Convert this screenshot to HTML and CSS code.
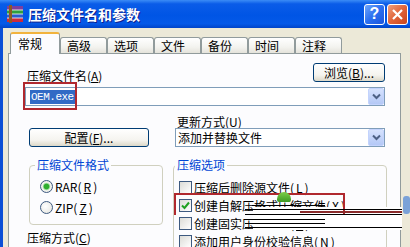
FILE: index.html
```html
<!DOCTYPE html>
<html lang="zh-CN">
<head>
  <meta charset="UTF-8">
  <title>压缩文件名和参数</title>
  <link rel="stylesheet" href="styles.css">
</head>
<body>
  <div class="window">
    <div class="titlebar">
      <svg class="app-icon" viewBox="0 0 19 18">
        <rect x="2" y="1" width="16" height="4" fill="#7b3f9e"/>
        <rect x="2" y="5" width="16" height="4" fill="#2f9f3f"/>
        <rect x="2" y="9" width="16" height="4" fill="#2c5ccc"/>
        <rect x="2" y="13" width="16" height="4" fill="#cc2a3c"/>
        <path d="M2 5h16M2 9h16M2 13h16" stroke="#fff" stroke-width="0.8"/>
        <rect x="4" y="0" width="3" height="18" fill="#8c5a24"/>
      </svg>
      <span class="title">压缩文件名和参数</span>
      <span class="tb-btn help">?</span>
      <span class="tb-btn close">
        <svg width="13" height="13" viewBox="0 0 13 13"><path d="M2 2L11 11M11 2L2 11" stroke="#fff" stroke-width="2.2"/></svg>
      </span>
    </div>

    <div class="client">
      <div class="tabs">
        <div class="tab active">常规</div>
        <div class="tab">高级</div>
        <div class="tab">选项</div>
        <div class="tab">文件</div>
        <div class="tab">备份</div>
        <div class="tab">时间</div>
        <div class="tab">注释</div>
      </div>

      <div class="panel">
        <div class="name-row">
          <span class="label">压缩文件名(<u>A</u>)</span>
          <button class="btn browse">浏览(<u>B</u>)...</button>
        </div>
        <div class="combo name-combo">
          <span class="sel">OEM.exe</span>
          <span class="drop"><svg width="9" height="7" viewBox="0 0 9 7"><path d="M1 1.5L4.5 5L8 1.5" fill="none" stroke="#4d6185" stroke-width="2"/></svg></span>
        </div>

        <div class="settings">
          <div class="col">
            <button class="btn config">配置(<u>F</u>)...</button>
            <fieldset class="group format">
              <legend>压缩文件格式</legend>
              <div class="opt radio-row"><span class="radio on"></span>RAR(<u>R</u>)</div>
              <div class="opt radio-row"><span class="radio"></span>ZIP(<u>Z</u>)</div>
            </fieldset>
            <div class="label method">压缩方式(<u>C</u>)</div>
          </div>
          <div class="col">
            <div class="label">更新方式(<u>U</u>)</div>
            <div class="combo">
              <span class="combo-text">添加并替换文件</span>
              <span class="drop"><svg width="9" height="7" viewBox="0 0 9 7"><path d="M1 1.5L4.5 5L8 1.5" fill="none" stroke="#4d6185" stroke-width="2"/></svg></span>
            </div>
            <fieldset class="group options">
              <legend>压缩选项</legend>
              <div class="opt check-row"><span class="check"></span>压缩后删除源文件(<u>L</u>)</div>
              <div class="opt check-row"><span class="check"><svg width="11" height="11" viewBox="0 0 11 11"><path d="M2 5.5L4.5 8L9 2.5" fill="none" stroke="#21a121" stroke-width="2"/></svg></span>创建自解压格式压缩文件(<u>X</u>)</div>
              <div class="opt check-row"><span class="check"></span>创建固实压缩文件(<u>S</u>)</div>
              <div class="opt check-row"><span class="check"></span>添加用户身份校验信息(<u>N</u>)</div>
            </fieldset>
          </div>
        </div>
      </div>
    </div>

    <!-- red marks and scribbles drawn over the screenshot -->
    <div class="mark mark-name"></div>
    <div class="wipe"></div>
    <div class="mark mark-sfx"></div>
    <div class="blob"></div>
    <div class="ink" style="left:252px; top:205px; width:73px;"></div>
    <div class="ink" style="left:245px; top:209px; width:157px;"></div>
    <div class="ink red" style="left:300px; top:211px; width:102px;"></div>
    <div class="ink" style="left:245px; top:214px; width:157px;"></div>
    <div class="ink" style="left:252px; top:219px; width:73px;"></div>
    <div class="ink" style="left:245px; top:223px; width:80px;"></div>
    <div class="ink" style="left:245px; top:227px; width:157px;"></div>
    <div class="side-blue"></div>
  </div>
</body>
</html>
```

FILE: styles.css
```css
* {
  box-sizing: border-box;
}
body {
  margin: 0;
  background: #ece9d8;
  font-family: "Noto Sans CJK SC", "Liberation Sans", sans-serif;
  font-size: 12px;
  color: #000;
}
u {
  text-decoration: underline;
}
.window {
  position: relative;
  width: 410px;
  height: 247px;
  overflow: hidden;
  background: #ece9d8;
}

/* title bar */
.titlebar {
  height: 28px;
  display: flex;
  align-items: center;
  padding: 0 2px 0 5px;
  background: linear-gradient(#3b8cf6, #0a5ce8 14%, #0055e5 55%, #0459e8 85%, #0044c8);
  color: #fff;
}
.app-icon {
  width: 19px;
  height: 18px;
  margin-right: 4px;
  flex: none;
}
.title {
  flex: 1;
  font-size: 14px;
  font-weight: bold;
  line-height: 16px;
  text-shadow: 1px 1px 0 #0f1f8c;
}
.tb-btn {
  width: 21px;
  height: 21px;
  margin-left: 2px;
  border: 1px solid #fff;
  border-radius: 3px;
  display: flex;
  align-items: center;
  justify-content: center;
  font-family: "Liberation Sans", sans-serif;
  font-weight: bold;
  font-size: 16px;
}
.help {
  background: linear-gradient(135deg, #6fa6fb, #2a6ff0 50%, #1b55dc);
}
.close {
  background: linear-gradient(135deg, #f0a07c, #e0643a 50%, #c8441c);
}

/* dialog client */
.client {
  height: 219px;
  border-left: 3px solid #0b4fd6;
}
.tabs {
  height: 25px;
  display: flex;
  align-items: flex-end;
  padding-left: 7px;
}
.tab {
  height: 16px;
  padding: 1px 15px 0 6px;
  line-height: 14px;
  border: 1px solid #919b9c;
  border-bottom: none;
  border-radius: 3px 3px 0 0;
  background: linear-gradient(#fff, #f3f3ef 60%, #e4e3db);
}
.tab.active {
  position: relative;
  z-index: 1;
  height: 22px;
  margin-bottom: -1px;
  padding: 3px 17px 0 7px;
  border-top: 2px solid #f2b33d;
  background: #fcfcfe;
}
.panel {
  width: 393px;
  height: 200px;
  margin-left: 5px;
  padding: 9px 15px 0 16px;
  border: 1px solid #919b9c;
  background: #fcfcfe;
}
.label {
  padding-left: 2px;
  line-height: 13px;
}
.name-row {
  height: 19px;
  display: flex;
  justify-content: space-between;
  align-items: flex-end;
}
.btn {
  height: 19px;
  padding: 0;
  font: inherit;
  line-height: 17px;
  color: #000;
  border: 1px solid #003c74;
  border-radius: 3px;
  background: linear-gradient(#fff, #f5f4ef 65%, #dcd8c8);
}
.browse {
  width: 72px;
}
.combo {
  height: 19px;
  display: flex;
  align-items: center;
  border: 1px solid #7f9db9;
  background: #fff;
}
.name-combo {
  margin-top: 5px;
}
.sel {
  margin-left: 4px;
  padding: 0 1px;
  font-family: "Liberation Mono", monospace;
  font-size: 11px;
  letter-spacing: -0.5px;
  line-height: 14px;
  background: #316ac5;
  color: #fff;
}
.combo-text {
  padding-left: 2px;
  line-height: 15px;
}
.drop {
  width: 16px;
  height: 17px;
  margin-left: auto;
  display: flex;
  align-items: center;
  justify-content: center;
  border: 1px solid #c3d3fd;
  border-radius: 2px;
  background: linear-gradient(#d6e2fd, #b4c8f6);
}

.settings {
  display: grid;
  grid-template-columns: 140px 210px;
  column-gap: 10px;
  margin-top: 9px;
}
.col {
  display: flex;
  flex-direction: column;
}
.config {
  width: 120px;
  margin: 13px 0 0 4px;
}
.group {
  margin: 11px 0 0;
  min-width: 0;
  border: 1px solid #d0d0bf;
  border-radius: 4px;
}
.group legend {
  padding: 0 2px;
  line-height: 14px;
  color: #0046d5;
}
.format {
  margin-left: 4px;
  margin-right: 2px;
  padding: 4px 5px 6px;
}
.options {
  margin-left: -2px;
  margin-right: -2px;
  padding: 6px 0 0 1px;
}
.opt {
  display: flex;
  align-items: center;
  white-space: nowrap;
}
.radio-row {
  height: 21px;
  padding-left: 5px;
  gap: 2px;
}
.check-row {
  height: 18px;
  padding-left: 4px;
  gap: 2px;
}
.radio {
  width: 13px;
  height: 13px;
  flex: none;
  border: 1px solid #3d5a80;
  border-radius: 50%;
  background: radial-gradient(circle at 40% 40%, #fff, #e2e2dc);
}
.radio.on {
  background: radial-gradient(circle, #2fae2f 0 2.4px, #9bdc9b 3.2px, #f4f4f0 4.2px, #e2e2dc);
}
.check {
  width: 13px;
  height: 13px;
  flex: none;
  display: flex;
  align-items: center;
  justify-content: center;
  border: 1px solid #3d5a80;
  background: linear-gradient(135deg, #dcdcd7, #fff);
}
.method {
  margin-top: 6px;
}

/* annotations over the dialog */
.mark {
  position: absolute;
  border: 2px solid #b0282e;
}
.mark-name {
  left: 23px;
  top: 82px;
  width: 54px;
  height: 28px;
}
.mark-sfx {
  left: 174px;
  top: 193px;
  width: 171px;
  height: 22px;
  border-bottom: none;
}
.wipe {
  position: absolute;
  left: 253px;
  top: 207px;
  width: 149px;
  height: 23px;
  background: #fff;
}
.ink {
  position: absolute;
  height: 1px;
  background: #000;
}
.ink.red {
  height: 2px;
  background: #8a2a2a;
}
.blob {
  position: absolute;
  left: 277px;
  top: 192px;
  width: 14px;
  height: 10px;
  border-radius: 7px 7px 2px 2px;
  background: linear-gradient(#7ccf4a, #3d9a24);
}
.side-blue {
  position: absolute;
  left: 403px;
  top: 196px;
  width: 7px;
  height: 18px;
  border-radius: 3px;
  background: #7aa2d8;
}
```
